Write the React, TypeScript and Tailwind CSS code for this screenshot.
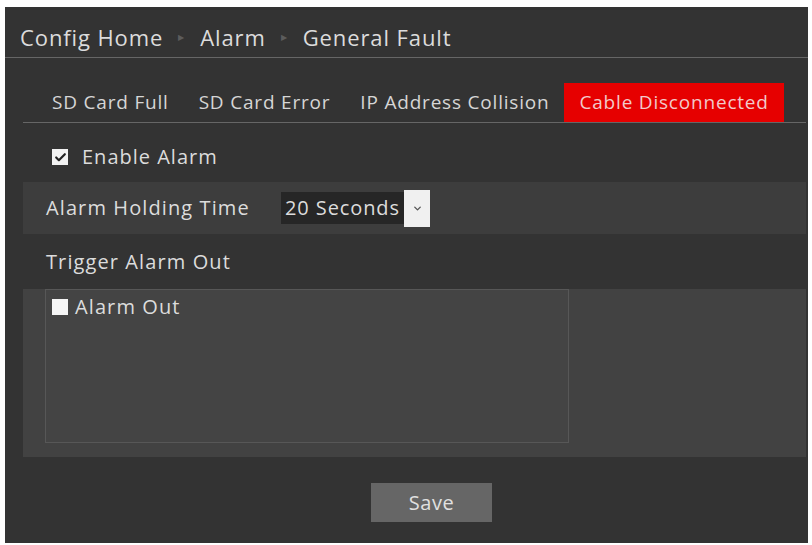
import { Check, ChevronDown } from "lucide-react";

const font = { fontFamily: '"Open Sans", "Liberation Sans", sans-serif' };

const tabs = ["SD Card Full", "SD Card Error", "IP Address Collision", "Cable Disconnected"];

export default function App() {
  const active = "Cable Disconnected";
  return (
    <div className="h-[545px] w-[812px] bg-white pb-[2px] pl-[5px] pr-[4px] pt-[7px]" style={font}>
      <div className="flex h-full flex-col bg-[#333333] text-[#dcdcdc]">
        {/* breadcrumb */}
        <div className="flex h-[51px] items-center gap-[15px] border-b border-[#666] pl-[15px] pt-[10px] text-[22px] tracking-[0.9px]">
          <span>Config Home</span>
          <span className="text-[8px] text-[#5c5c5c]">▶</span>
          <span>Alarm</span>
          <span className="text-[8px] text-[#5c5c5c]">▶</span>
          <span>General Fault</span>
        </div>

        <div className="ml-[18px] mr-[2px] flex flex-col">
          {/* tabs */}
          <div className="flex h-[65px] items-end border-b border-[#666] pl-[14px]">
            {tabs.map((t) => (
              <div
                key={t}
                className={
                  "flex h-[39px] items-center px-[15px] text-[19px] tracking-[0.8px] " +
                  (t === active ? "bg-[#e60000] text-[#f2c9c9]" : "text-[#d6d6d6]")
                }
              >
                {t}
              </div>
            ))}
          </div>

          {/* enable */}
          <div className="flex h-[59px] items-center gap-[14px] pl-[29px] pt-[9px] text-[20px] tracking-[1px]">
            <span className="flex h-[16px] w-[16px] items-center justify-center bg-[#f2f2f2]">
              <Check className="size-[13px] text-[#222]" strokeWidth={4} />
            </span>
            <span>Enable Alarm</span>
          </div>

          {/* holding time */}
          <div className="flex h-[52px] items-center bg-[#3d3d3d] pl-[23px] text-[20px] tracking-[1.1px]">
            <span className="w-[235px]">Alarm Holding Time</span>
            <div className="flex items-center">
              <span className="flex h-[32px] w-[123px] items-center bg-[#262626] pl-[4px] tracking-[0.9px]">20 Seconds</span>
              <span className="flex h-[37px] w-[26px] items-center justify-center bg-[#f0f0f0]">
                <ChevronDown className="size-[11px] text-[#555]" strokeWidth={3} />
              </span>
            </div>
          </div>

          {/* trigger */}
          <div className="flex h-[55px] items-center pl-[23px] text-[20px] tracking-[1.1px]">Trigger Alarm Out</div>

          <div className="h-[168px] bg-[#424242] pl-[22px] pb-[14px]">
            <div className="h-[154px] w-[524px] border border-[#575757] bg-[#444] px-[6px] pt-[2px]">
              <div className="flex items-center gap-[7px] text-[20px] tracking-[1.1px]">
                <span className="h-[16px] w-[16px] bg-[#f5f5f5]" />
                <span>Alarm Out</span>
              </div>
            </div>
          </div>
        </div>

        <div className="flex pl-[366px] pt-[26px]">
          <button className="h-[39px] w-[121px] bg-[#666] text-[20px] tracking-[0.5px] text-[#e0e0e0]">Save</button>
        </div>
      </div>
    </div>
  );
}
